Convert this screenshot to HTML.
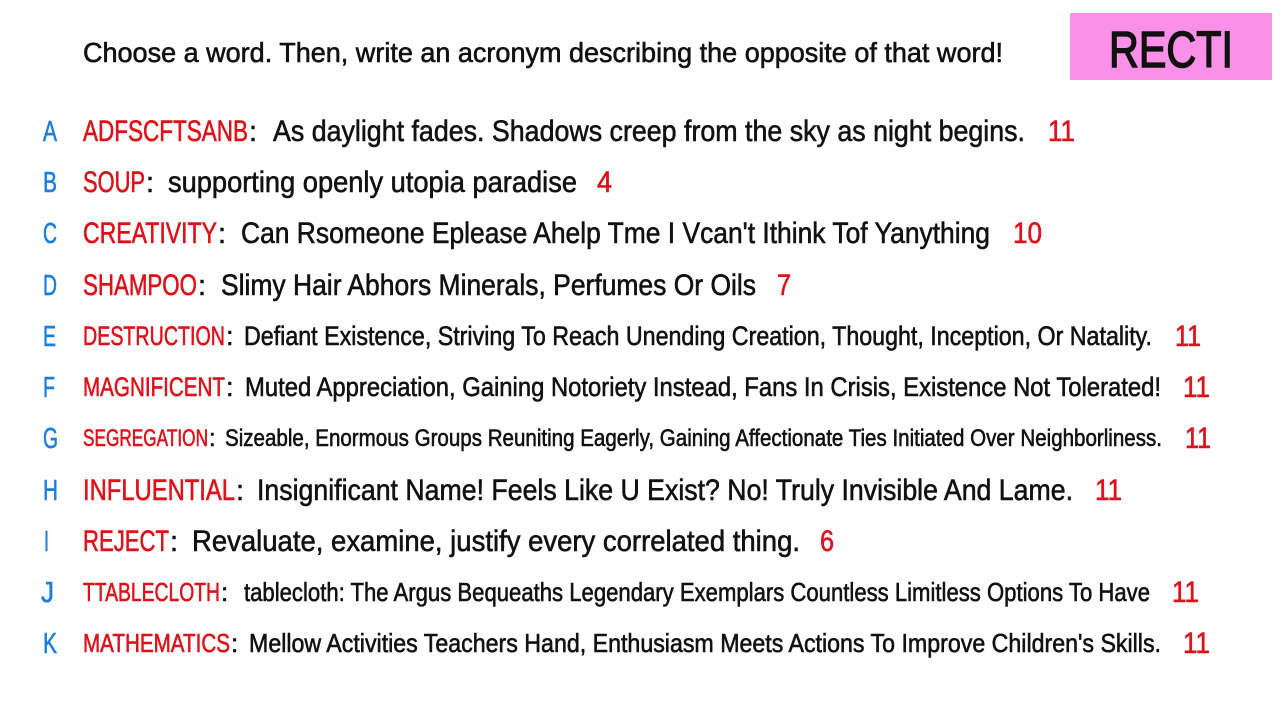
<!DOCTYPE html>
<html><head><meta charset="utf-8"><style>
html,body{margin:0;padding:0;background:#fff;width:1280px;height:720px;overflow:hidden}
svg{display:block}
text{font-family:"Liberation Sans Narrow","Liberation Sans",sans-serif;stroke-width:0.6px}
.b{fill:#1a7ee0;stroke:#1a7ee0}.r{fill:#e0101a;stroke:#e0101a}.k{fill:#111;stroke:#111}
</style></head><body>
<svg width="1280" height="720" viewBox="0 0 1280 720" xmlns="http://www.w3.org/2000/svg">
<rect x="1070" y="13" width="202" height="67" fill="#fa90e8"/>
<text x="1109" y="67" font-size="51" class="k" style="stroke-width:1.5px" textLength="124" lengthAdjust="spacingAndGlyphs">RECTI</text>
<text x="83" y="62" font-size="28" class="k" textLength="920" lengthAdjust="spacingAndGlyphs">Choose a word. Then, write an acronym describing the opposite of that word!</text>

<g font-size="29">
<text x="43" y="141" class="b" textLength="14" lengthAdjust="spacingAndGlyphs">A</text>
<text x="43" y="192" class="b" textLength="14" lengthAdjust="spacingAndGlyphs">B</text>
<text x="43" y="243" class="b" textLength="14" lengthAdjust="spacingAndGlyphs">C</text>
<text x="43" y="295" class="b" textLength="14" lengthAdjust="spacingAndGlyphs">D</text>
<text x="43" y="346" class="b" textLength="13" lengthAdjust="spacingAndGlyphs">E</text>
<text x="43" y="397" class="b" textLength="12" lengthAdjust="spacingAndGlyphs">F</text>
<text x="43" y="448" class="b" textLength="15" lengthAdjust="spacingAndGlyphs">G</text>
<text x="43" y="500" class="b" textLength="15" lengthAdjust="spacingAndGlyphs">H</text>
<text x="44" y="551" class="b" textLength="5" lengthAdjust="spacingAndGlyphs">I</text>
<text x="41" y="602" class="b" textLength="13" lengthAdjust="spacingAndGlyphs">J</text>
<text x="43" y="653" class="b" textLength="14" lengthAdjust="spacingAndGlyphs">K</text>
</g>

<text x="83" y="141" font-size="30" class="r" textLength="165" lengthAdjust="spacingAndGlyphs">ADFSCFTSANB</text>
<text x="249" y="141" font-size="29" class="k">:</text>
<text x="273" y="141" font-size="30" class="k" textLength="752" lengthAdjust="spacingAndGlyphs">As daylight fades. Shadows creep from the sky as night begins.</text>
<text x="1048" y="141" font-size="30" class="r" textLength="27" lengthAdjust="spacingAndGlyphs">11</text>

<text x="83" y="192" font-size="30" class="r" textLength="62" lengthAdjust="spacingAndGlyphs">SOUP</text>
<text x="146" y="192" font-size="29" class="k">:</text>
<text x="168" y="192" font-size="30" class="k" textLength="409" lengthAdjust="spacingAndGlyphs">supporting openly utopia paradise</text>
<text x="597" y="192" font-size="30" class="r" textLength="15" lengthAdjust="spacingAndGlyphs">4</text>

<text x="83" y="243" font-size="30" class="r" textLength="134" lengthAdjust="spacingAndGlyphs">CREATIVITY</text>
<text x="218" y="243" font-size="29" class="k">:</text>
<text x="241" y="243" font-size="30" class="k" textLength="749" lengthAdjust="spacingAndGlyphs">Can Rsomeone Eplease Ahelp Tme I Vcan't Ithink Tof Yanything</text>
<text x="1013" y="243" font-size="30" class="r" textLength="29" lengthAdjust="spacingAndGlyphs">10</text>

<text x="83" y="295" font-size="30" class="r" textLength="114" lengthAdjust="spacingAndGlyphs">SHAMPOO</text>
<text x="198" y="295" font-size="29" class="k">:</text>
<text x="221" y="295" font-size="30" class="k" textLength="535" lengthAdjust="spacingAndGlyphs">Slimy Hair Abhors Minerals, Perfumes Or Oils</text>
<text x="777" y="295" font-size="30" class="r" textLength="14" lengthAdjust="spacingAndGlyphs">7</text>

<text x="83" y="345" font-size="27" class="r" textLength="142" lengthAdjust="spacingAndGlyphs">DESTRUCTION</text>
<text x="226" y="345" font-size="27" class="k">:</text>
<text x="244" y="345" font-size="27" class="k" textLength="908" lengthAdjust="spacingAndGlyphs">Defiant Existence, Striving To Reach Unending Creation, Thought, Inception, Or Natality.</text>
<text x="1175" y="346" font-size="30" class="r" textLength="26" lengthAdjust="spacingAndGlyphs">11</text>

<text x="83" y="396" font-size="27" class="r" textLength="142" lengthAdjust="spacingAndGlyphs">MAGNIFICENT</text>
<text x="226" y="396" font-size="27" class="k">:</text>
<text x="245" y="396" font-size="27" class="k" textLength="916" lengthAdjust="spacingAndGlyphs">Muted Appreciation, Gaining Notoriety Instead, Fans In Crisis, Existence Not Tolerated!</text>
<text x="1183" y="397" font-size="30" class="r" textLength="27" lengthAdjust="spacingAndGlyphs">11</text>

<text x="83" y="446" font-size="24" class="r" textLength="125" lengthAdjust="spacingAndGlyphs">SEGREGATION</text>
<text x="209" y="446" font-size="24" class="k">:</text>
<text x="225" y="446" font-size="24" class="k" textLength="937" lengthAdjust="spacingAndGlyphs">Sizeable, Enormous Groups Reuniting Eagerly, Gaining Affectionate Ties Initiated Over Neighborliness.</text>
<text x="1185" y="448" font-size="30" class="r" textLength="26" lengthAdjust="spacingAndGlyphs">11</text>

<text x="83" y="500" font-size="30" class="r" textLength="152" lengthAdjust="spacingAndGlyphs">INFLUENTIAL</text>
<text x="236" y="500" font-size="29" class="k">:</text>
<text x="257" y="500" font-size="30" class="k" textLength="816" lengthAdjust="spacingAndGlyphs">Insignificant Name! Feels Like U Exist? No! Truly Invisible And Lame.</text>
<text x="1095" y="500" font-size="30" class="r" textLength="27" lengthAdjust="spacingAndGlyphs">11</text>

<text x="83" y="551" font-size="30" class="r" textLength="86" lengthAdjust="spacingAndGlyphs">REJECT</text>
<text x="170" y="551" font-size="29" class="k">:</text>
<text x="192" y="551" font-size="30" class="k" textLength="608" lengthAdjust="spacingAndGlyphs">Revaluate, examine, justify every correlated thing.</text>
<text x="820" y="551" font-size="30" class="r" textLength="14" lengthAdjust="spacingAndGlyphs">6</text>

<text x="83" y="601" font-size="26" class="r" textLength="137" lengthAdjust="spacingAndGlyphs">TTABLECLOTH</text>
<text x="221" y="601" font-size="26" class="k">:</text>
<text x="244" y="601" font-size="26" class="k" textLength="906" lengthAdjust="spacingAndGlyphs">tablecloth: The Argus Bequeaths Legendary Exemplars Countless Limitless Options To Have</text>
<text x="1172" y="602" font-size="30" class="r" textLength="27" lengthAdjust="spacingAndGlyphs">11</text>

<text x="83" y="652" font-size="26" class="r" textLength="147" lengthAdjust="spacingAndGlyphs">MATHEMATICS</text>
<text x="231" y="652" font-size="26" class="k">:</text>
<text x="249" y="652" font-size="26" class="k" textLength="912" lengthAdjust="spacingAndGlyphs">Mellow Activities Teachers Hand, Enthusiasm Meets Actions To Improve Children's Skills.</text>
<text x="1183" y="653" font-size="30" class="r" textLength="27" lengthAdjust="spacingAndGlyphs">11</text>
</svg>
</body></html>
